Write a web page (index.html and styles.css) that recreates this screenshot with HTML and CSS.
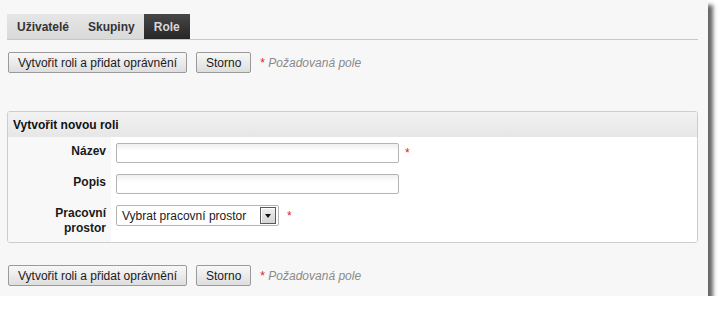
FILE: index.html
```html
<!DOCTYPE html>
<html lang="cs">
<head>
<meta charset="utf-8">
<title>Role</title>
<link rel="stylesheet" href="styles.css">
</head>
<body>
<div class="page">
  <div class="tabs">
    <a class="tab">Uživatelé</a>
    <a class="tab">Skupiny</a>
    <a class="tab active">Role</a>
  </div>

  <div class="actions top">
    <button class="btn">Vytvořit roli a přidat oprávnění</button>
    <button class="btn">Storno</button>
    <span class="req"><span class="star">*</span> Požadovaná pole</span>
  </div>

  <div class="panel">
    <div class="panel-head">Vytvořit novou roli</div>
    <div class="panel-body">
      <div class="row">
        <label class="lbl">Název</label>
        <div class="field"><input class="inp" type="text"><span class="star">*</span></div>
      </div>
      <div class="row">
        <label class="lbl">Popis</label>
        <div class="field"><input class="inp" type="text"></div>
      </div>
      <div class="row">
        <label class="lbl">Pracovní<br>prostor</label>
        <div class="field">
          <div class="select"><span class="sel-text">Vybrat pracovní prostor</span><span class="sel-btn"><span class="tri"></span></span></div>
          <span class="star sel-star">*</span>
        </div>
      </div>
    </div>
  </div>

  <div class="actions bottom">
    <button class="btn">Vytvořit roli a přidat oprávnění</button>
    <button class="btn">Storno</button>
    <span class="req"><span class="star">*</span> Požadovaná pole</span>
  </div>
</div>
</body>
</html>
```

FILE: styles.css
```css
html, body {
  margin: 0;
  padding: 0;
  background: #ffffff;
}

body {
  font-family: "Liberation Sans", Arial, sans-serif;
  font-size: 12px;
  color: #222;
}

.page {
  width: 708px;
  height: 296px;
  background: #f7f7f7;
  box-shadow: 5px 5px 4px rgba(0, 0, 0, 0.6);
  padding: 14px 0 0 7px;
  box-sizing: border-box;
}

.tabs {
  display: flex;
  width: 691px;
  height: 25px;
  border-bottom: 1px solid #c8c8c8;
}

.tab {
  display: flex;
  align-items: center;
  padding: 0 9px 0 10px;
  font-weight: bold;
  color: #333;
  background: linear-gradient(#e6e6e6, #d9d9d9);
}

.tab.active {
  background: linear-gradient(#474747, #262626);
  color: #d8d8d8;
  padding: 0 10px;
}

.actions {
  display: flex;
  align-items: center;
  padding-left: 1px;
}

.actions.top {
  margin-top: 12px;
}

.actions.bottom {
  margin-top: 22px;
}

.btn {
  height: 21px;
  margin: 0 9px 0 0;
  padding: 0 9px;
  font-family: "Liberation Sans", Arial, sans-serif;
  font-size: 12px;
  color: #1a1a1a;
  border: 1px solid #9a9a9a;
  border-radius: 2px;
  background: linear-gradient(#f8f8f8, #dedede);
}

.req {
  font-style: italic;
  color: #8a8a8a;
}

.star {
  color: #d22;
  font-style: normal;
}

.panel {
  margin-top: 38px;
  width: 689px;
  border: 1px solid #cdcdcd;
  border-radius: 3px;
  background: #fff;
  overflow: hidden;
}

.panel-head {
  height: 25px;
  line-height: 26px;
  padding-left: 5px;
  font-weight: bold;
  color: #111;
  background: linear-gradient(#f2f2f2, #e6e6e6);
}

.panel-body {
  display: flex;
  flex-direction: column;
  gap: 11px;
  padding: 6px 0;
  background: linear-gradient(to right, #f8f8f8 103px, #ffffff 103px);
}

.row {
  display: grid;
  grid-template-columns: 98px 1fr;
  column-gap: 10px;
}

.lbl {
  text-align: right;
  font-weight: bold;
  line-height: 15px;
  padding-top: 1px;
  color: #1a1a1a;
}

.field {
  display: flex;
  align-items: center;
  align-self: start;
  gap: 6px;
}

.inp {
  width: 283px;
  height: 20px;
  box-sizing: border-box;
  margin: 0;
  border: 1px solid #b4b4b4;
  border-radius: 2px;
  background: linear-gradient(#efefef, #ffffff 7px);
}

.select {
  display: flex;
  align-items: center;
  justify-content: space-between;
  width: 163px;
  height: 21px;
  box-sizing: border-box;
  border: 1px solid #b4b4b4;
  border-radius: 2px;
  background: #fff;
  padding: 0 2px 0 5px;
}

.sel-text {
  color: #1a1a1a;
}

.sel-btn {
  display: flex;
  align-items: center;
  justify-content: center;
  width: 16px;
  height: 17px;
  box-sizing: border-box;
  border: 1px solid #5a5a5a;
  box-shadow: inset 1px 1px 0 #fff;
  background: linear-gradient(#f0f0f0, #d4d4d4);
}

.tri {
  width: 0;
  height: 0;
  border-left: 3.5px solid transparent;
  border-right: 3.5px solid transparent;
  border-top: 4px solid #111;
}

.sel-star {
  margin-left: 2px;
}
```
